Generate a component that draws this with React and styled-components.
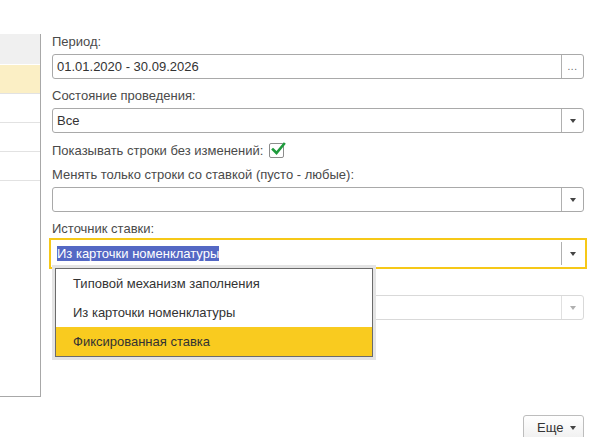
import React from 'react';
import styled, { createGlobalStyle } from 'styled-components';

const Global = createGlobalStyle`
  html, body {
    margin: 0;
    padding: 0;
    background: #fff;
  }
  body {
    font-family: "Liberation Sans", Arial, sans-serif;
    font-size: 13px;
    color: #333;
  }
`;

const Page = styled.div`
  display: flex;
  width: 593px;
  height: 437px;
  overflow: hidden;
`;

const ListPanel = styled.div`
  margin-top: 34px;
  width: 41px;
  height: 363px;
  box-sizing: border-box;
  border-right: 1px solid #a8a8a8;
  border-bottom: 1px solid #a8a8a8;
  display: flex;
  flex-direction: column;
  flex-shrink: 0;
`;

const ListHeader = styled.div`
  height: 30px;
  background: #f0f0f0;
  border-bottom: 1px solid #fff;
`;

const ListRow = styled.div`
  height: 28px;
  border-bottom: 1px solid #e2e2e2;
  background: ${p => (p.$current ? '#fbefc5' : '#fff')};
`;

const Form = styled.div`
  flex: 1;
  display: flex;
  flex-direction: column;
  padding: 34px 9px 0 11px;
`;

const Label = styled.div`
  height: 16px;
  line-height: 16px;
  color: #4a4a4a;
  white-space: nowrap;
  margin-bottom: 4px;
`;

const Group = styled.div`
  position: relative;
  margin-bottom: 9px;
`;

const Field = styled.div`
  position: relative;
  display: flex;
  align-items: stretch;
  height: 25px;
  box-sizing: border-box;
  border: 1px solid ${p => (p.$disabled ? '#d9d9d9' : '#a9a9a9')};
  border-radius: ${p => (p.$focused ? '0' : '3px')};
  background: #fff;
  ${p => p.$focused && `
    border-color: #fff;
    box-shadow: 0 0 0 1px #fff, 0 0 0 3px #f6c818;
  `}
`;

const Value = styled.div`
  flex: 1;
  display: flex;
  align-items: center;
  padding-left: 4px;
  color: #333;
  white-space: nowrap;
  overflow: hidden;
`;

const Selected = styled.span`
  background: #5468c4;
  color: #fff;
  line-height: 15px;
`;

const FieldButton = styled.div`
  width: 21px;
  display: flex;
  align-items: center;
  justify-content: center;
  border-left: 1px solid ${p => (p.$disabled ? '#e0e0e0' : '#b0b0b0')};
  color: #666;
  font-size: 10px;
  letter-spacing: 0.5px;
`;

const Arrow = styled.span`
  width: 0;
  height: 0;
  border-left: 3.5px solid transparent;
  border-right: 3.5px solid transparent;
  border-top: 4px solid ${p => (p.$disabled ? '#b0b0b0' : '#444')};
`;

const CheckRow = styled.div`
  display: flex;
  align-items: center;
  height: 16px;
  margin-bottom: 9px;
  color: #4a4a4a;
`;

const CheckBox = styled.div`
  position: relative;
  width: 15px;
  height: 15px;
  box-sizing: border-box;
  margin-left: 6px;
  border: 1px solid #8c8c8c;
  border-radius: 2px;
  background: #fff;
  svg {
    position: absolute;
    left: 1px;
    top: -3px;
  }
`;

const Popup = styled.div`
  position: absolute;
  left: 3px;
  top: 47px;
  width: 318px;
  box-sizing: border-box;
  border: 1px solid #6b6b6b;
  background: #fff;
  box-shadow: 0 0 0 3px #e4e4e4;
  z-index: 2;
`;

const Option = styled.div`
  height: 29px;
  line-height: 29px;
  padding-left: 17px;
  color: #333;
  background: ${p => (p.$active ? '#f9cb1f' : '#fff')};
`;

const Footer = styled.div`
  margin-top: auto;
  margin-bottom: -3px;
  display: flex;
  justify-content: flex-end;
`;

const MoreButton = styled.div`
  display: flex;
  align-items: center;
  gap: 7px;
  height: 25px;
  width: 61px;
  box-sizing: border-box;
  padding-left: 13px;
  border: 1px solid #bdbdbd;
  border-radius: 3px;
  background: linear-gradient(#ffffff, #f0f0f0);
  color: #333;
  font-size: 13px;
`;

const options = ['Типовой механизм заполнения', 'Из карточки номенклатуры', 'Фиксированная ставка'];

export default function App() {
  return (
    <>
      <Global />
      <Page>
        <ListPanel>
          <ListHeader />
          <ListRow $current />
          <ListRow />
          <ListRow />
          <ListRow />
        </ListPanel>
        <Form>
          <Group>
            <Label>Период:</Label>
            <Field>
              <Value>01.01.2020 - 30.09.2026</Value>
              <FieldButton>...</FieldButton>
            </Field>
          </Group>
          <Group>
            <Label>Состояние проведения:</Label>
            <Field>
              <Value>Все</Value>
              <FieldButton><Arrow /></FieldButton>
            </Field>
          </Group>
          <CheckRow>
            Показывать строки без изменений:
            <CheckBox>
              <svg width="16" height="16" viewBox="0 0 16 16">
                <path d="M2 8.5 L5.5 12 L13 3" fill="none" stroke="#1e9b3c" strokeWidth="2.6" strokeLinecap="square" />
              </svg>
            </CheckBox>
          </CheckRow>
          <Group>
            <Label>Менять только строки со ставкой (пусто - любые):</Label>
            <Field>
              <Value />
              <FieldButton><Arrow /></FieldButton>
            </Field>
          </Group>
          <Group>
            <Label>Источник ставки:</Label>
            <Field $focused>
              <Value><Selected>Из карточки номенклатуры</Selected></Value>
              <FieldButton><Arrow /></FieldButton>
            </Field>
            <Popup>
              {options.map((o, i) => (
                <Option key={o} $active={i === 2}>{o}</Option>
              ))}
            </Popup>
          </Group>
          <Group>
            <Label />
            <Field $disabled>
              <Value />
              <FieldButton $disabled><Arrow $disabled /></FieldButton>
            </Field>
          </Group>
          <Footer>
            <MoreButton>Еще <Arrow /></MoreButton>
          </Footer>
        </Form>
      </Page>
    </>
  );
}
